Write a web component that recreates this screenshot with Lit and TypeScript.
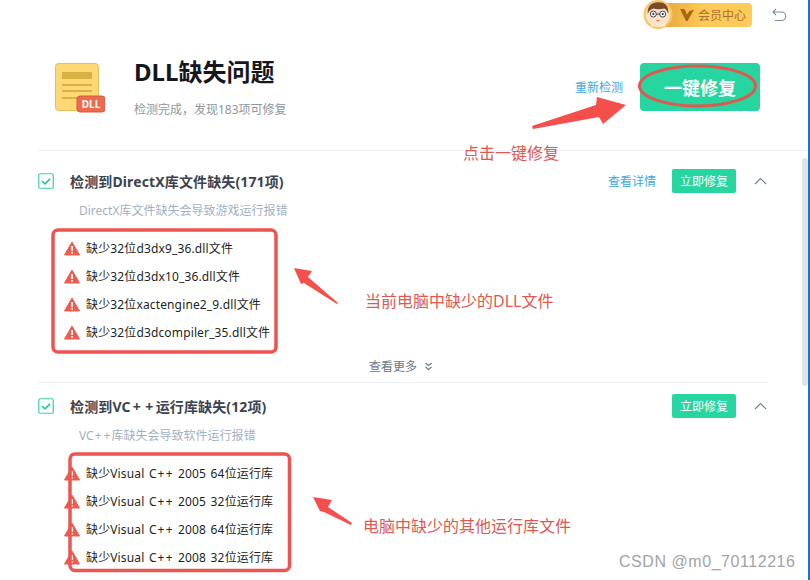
import { LitElement, html, css, svg } from "lit";
import { customElement } from "lit/decorators.js";

const warn = html`<svg class="warn" width="16" height="15" viewBox="0 0 16 15"><path d="M8 1 15.500 14H.5Z" fill="#ee5c50" stroke="#ee5c50" stroke-width="1" stroke-linejoin="round"/><rect x="7.200" y="5" width="1.700" height="5" fill="#fff"/><rect x="7.200" y="11" width="1.700" height="1.700" fill="#fff"/></svg>`;
const chevron = html`<svg class="chev" width="13" height="8" viewBox="0 0 13 8"><path d="M1 7 6.500 1.500 12 7" fill="none" stroke="#6f7f92" stroke-width="1.100"/></svg>`;
const check = html`<svg class="check" width="16" height="16" viewBox="0 0 16 16"><rect x=".75" y=".75" width="14.500" height="14.500" rx="1.500" fill="#fff" stroke="#3fcfa6" stroke-width="1.200"/><path d="M4 8l3 2.800 5-5" fill="none" stroke="#26c79a" stroke-width="1.700"/></svg>`;

/* The reference's UI font sets "+" much wider than the available fonts do. */
const plus = (text: string) => {
  const parts = text.split("+");
  return parts.map((p, i) => (i < parts.length - 1 ? html`${p}<span class="plus">+</span>` : html`${p}`));
};

const sections = [
  {
    title: "检测到DirectX库文件缺失(171项)",
    desc: "DirectX库文件缺失会导致游戏运行报错",
    detail: true,
    more: true,
    items: ["缺少32位d3dx9_36.dll文件", "缺少32位d3dx10_36.dll文件", "缺少32位xactengine2_9.dll文件", "缺少32位d3dcompiler_35.dll文件"],
  },
  {
    title: "检测到VC++运行库缺失(12项)",
    desc: "VC++库缺失会导致软件运行报错",
    detail: false,
    more: false,
    items: ["缺少Visual C++ 2005 64位运行库", "缺少Visual C++ 2005 32位运行库", "缺少Visual C++ 2008 64位运行库", "缺少Visual C++ 2008 32位运行库"],
  },
];

@customElement("app-root")
export class AppRoot extends LitElement {
  static styles = css`
    :host {
      display: block;
      position: relative;
      width: 810px;
      height: 580px;
      overflow: hidden;
      background: #fff;
      font-family: "Noto Sans", "Noto Sans CJK SC", sans-serif;
      box-sizing: border-box;
      border-right: 2px solid #1b76c2;
    }
    .top {
      height: 32px;
      display: flex;
      justify-content: flex-end;
      align-items: flex-start;
      padding-right: 21px;
    }
    .vip { display: flex; align-items: flex-start; }
    .avatar { position: relative; z-index: 1; display: block; }
    .pill {
      display: flex;
      align-items: center;
      height: 24px;
      margin-top: 3px;
      margin-left: -8px;
      padding-left: 15px;
      width: 72px;
      border-radius: 0 4px 4px 0;
      background: linear-gradient(90deg, #e8a93c, #ffca58 45%);
      color: #a8702a;
      font-size: 12px;
      gap: 4px;
    }
    .undo { margin: 8px 0 0 20px; display: block; }
    .head {
      height: 119px;
      box-sizing: border-box;
      margin-left: 38px;
      padding: 24px 48px 0 17px;
      border-bottom: 1px solid #eef0f2;
      display: flex;
      align-items: flex-start;
    }
    .doc { margin-top: 7px; display: block; }
    .head-text { margin-left: 29px; flex: 1; }
    h1 {
      margin: 0;
      font-size: 24px;
      line-height: 32px;
      font-weight: 700;
      color: #15171c;
    }
    .sub {
      margin-top: 14px;
      font-size: 12px;
      line-height: 16px;
      color: #8f969e;
    }
    .head-actions {
      margin-top: 7px;
      display: flex;
      align-items: center;
      gap: 17px;
    }
    .link { font-size: 12px; color: #3aa9e2; }
    .fix {
      width: 120px;
      height: 48px;
      display: flex;
      align-items: center;
      justify-content: center;
      background: #26d5a0;
      border-radius: 4px;
      color: #fff;
      font-size: 18px;
      font-weight: 700;
    }
    .section {
      margin: 0 40px 0 38px;
      padding: 18px 0 6px;
      border-bottom: 1px solid #eef0f2;
    }
    .section.last { padding-top: 11px; border-bottom: 0; }
    .row { display: flex; align-items: center; height: 24px; }
    .check { display: block; flex: none; margin-right: 16px; }
    .title { font-size: 14px; font-weight: 700; color: #3c4350; flex: 1; letter-spacing: 0.13px; }
    .title .plus { margin: 0 2.200px; }
    .row .link { margin-right: 16px; }
    .btn {
      width: 64px;
      height: 24px;
      display: flex;
      align-items: center;
      justify-content: center;
      background: #26d5a0;
      border-radius: 2px;
      color: #fff;
      font-size: 12px;
    }
    .chev { display: block; margin: 0 1px 0 18px; }
    .desc {
      margin: 10px 0 0 41px;
      font-size: 12px;
      line-height: 16px;
      color: #9fb0c2;
    }
    .desc .plus { margin: 0 1px; }
    ul { list-style: none; margin: 15px 0 0; padding: 0 0 0 26px; }
    li {
      height: 28px;
      display: flex;
      align-items: center;
      font-size: 12px;
      color: #1d1f24;
      letter-spacing: 0.14px;
      word-spacing: 1.300px;
    }
    li .plus { margin: 0 0.700px; }
    .warn { display: block; flex: none; margin-right: 6px; }
    .more {
      margin-top: 10px;
      padding-left: 331px;
      height: 20px;
      display: flex;
      align-items: center;
      gap: 8px;
      font-size: 12px;
      color: #6a7785;
    }
    .scroll {
      position: absolute;
      left: 802px;
      top: 158px;
      width: 6px;
      height: 228px;
      background: #e4e4e4;
      border-radius: 3px;
    }
    .ann { position: absolute; left: 0; top: 0; pointer-events: none; }
    .note {
      position: absolute;
      font-size: 16px;
      line-height: 22px;
      color: #e2574f;
      white-space: nowrap;
    }
    .n1 { left: 463px; top: 142px; }
    .n2 { left: 365px; top: 290px; }
    .n3 { left: 363px; top: 515px; }
    .mark {
      position: absolute;
      left: 619px;
      top: 552px;
      font-family: "Liberation Sans", sans-serif;
      font-size: 16px;
      line-height: 20px;
      letter-spacing: 0.55px;
      color: #a3a3a3;
      white-space: nowrap;
    }
  `;

  render() {
    return html`
      <div class="top">
        <div class="vip">
          <svg class="avatar" width="30" height="30" viewBox="0 0 32 32">
            <circle cx="16" cy="15.500" r="15.500" fill="#f8c766"/>
            <circle cx="16" cy="15.500" r="13" fill="#fbe3c9"/>
            <path d="M5 15C4 5 11 2.500 17 2.500c7 0 11 5 10 12.500-1-3-2-5-4-6-4 1-9 1-12 0-3 1-5 3-6 6Z" fill="#7a4a2a"/>
            <path d="M9 25c4 3.500 10 3.500 14 0l1 3H8Z" fill="#f5f0ea"/>
            <circle cx="11" cy="15" r="3.200" fill="#fff" stroke="#3a3a3a" stroke-width="1"/>
            <circle cx="21" cy="15" r="3.200" fill="#fff" stroke="#3a3a3a" stroke-width="1"/>
            <path d="M14 15h4" stroke="#3a3a3a" stroke-width="1"/>
            <circle cx="11" cy="15" r="1.200" fill="#3a3a3a"/>
            <circle cx="21" cy="15" r="1.200" fill="#3a3a3a"/>
            <path d="M14.500 22h3" stroke="#d85a4a" stroke-width="1.200"/>
          </svg>
          <div class="pill">
            <svg width="14" height="12" viewBox="0 0 14 12"><path d="M0 0h4.500L7 5.500 9.500 2 14 .5 7.500 12h-1.500Z" fill="#a9660e"/></svg>
            <span>会员中心</span>
          </div>
        </div>
        <svg class="undo" width="15" height="14" viewBox="0 0 15 14"><path d="M4 1 1 4l3 3M1 4h8.500a4 4 0 0 1 0 8.500H3" fill="none" stroke="#7d8ea0" stroke-width="1.100"/></svg>
      </div>
      <div class="head">
        <svg class="doc" width="50" height="50" viewBox="0 0 50 50">
          <rect x=".5" y=".5" width="43" height="47" rx="3" fill="#ffd873" stroke="#e5bd62"/>
          <rect x="7" y="9" width="30" height="7" fill="#d8b244"/>
          <rect x="7" y="21" width="30" height="2" fill="#d8b244"/>
          <rect x="7" y="27" width="30" height="2" fill="#d8b244"/>
          <rect x="7" y="34" width="30" height="2" fill="#d8b244"/>
          <rect x="22" y="33" width="28" height="16" rx="3" fill="#ee6a4c" stroke="#d85a40"/>
          <text x="36" y="45" text-anchor="middle" font-size="10" font-weight="700" fill="#fff" font-family="Noto Sans">DLL</text>
        </svg>
        <div class="head-text">
          <h1>DLL缺失问题</h1>
          <div class="sub">检测完成，发现183项可修复</div>
        </div>
        <div class="head-actions">
          <span class="link">重新检测</span>
          <div class="fix">一键修复</div>
        </div>
      </div>
      ${sections.map(
        (s, i) => html`
          <div class="section ${i === sections.length - 1 ? "last" : ""}">
            <div class="row">
              ${check}
              <div class="title">${plus(s.title)}</div>
              ${s.detail ? html`<span class="link">查看详情</span>` : ""}
              <div class="btn">立即修复</div>
              ${chevron}
            </div>
            <div class="desc">${plus(s.desc)}</div>
            <ul>
              ${s.items.map((t) => html`<li>${warn}<span>${plus(t)}</span></li>`)}
            </ul>
            ${s.more
              ? html`<div class="more">
                  <span>查看更多</span>
                  <svg width="7" height="9" viewBox="0 0 7 9"><path d="M.5 1l3 2.500L6.500 1M.5 5l3 2.500L6.500 5" fill="none" stroke="#6a7785" stroke-width="1.100"/></svg>
                </div>`
              : ""}
          </div>
        `
      )}
      <div class="scroll"></div>
      <svg class="ann" width="810" height="580" viewBox="0 0 810 580">
        ${svg`
          <ellipse cx="697.500" cy="86" rx="58" ry="20" fill="none" stroke="#e2574f" stroke-width="3"/>
          <polygon points="532,126 596,105 597,97 626,105 603,124 599,117 533,129" fill="#f44f4a"/>
          <rect x="53" y="230" width="223" height="122" rx="5" fill="none" stroke="#f0524e" stroke-width="3.500"/>
          <polygon points="294,268 312,271 308,277 338,303 337,304 304,283 301,284" fill="#f44f4a"/>
          <rect x="70" y="454" width="219.500" height="116.500" rx="5" fill="none" stroke="#ec5550" stroke-width="3.500"/>
          <polygon points="313,497 332,500 328,507 352,523 351,525 324,512 320,511" fill="#f44f4a"/>
        `}
      </svg>
      <div class="note n1">点击一键修复</div>
      <div class="note n2">当前电脑中缺少的DLL文件</div>
      <div class="note n3">电脑中缺少的其他运行库文件</div>
      <div class="mark">CSDN @m0_70112216</div>
    `;
  }
}
